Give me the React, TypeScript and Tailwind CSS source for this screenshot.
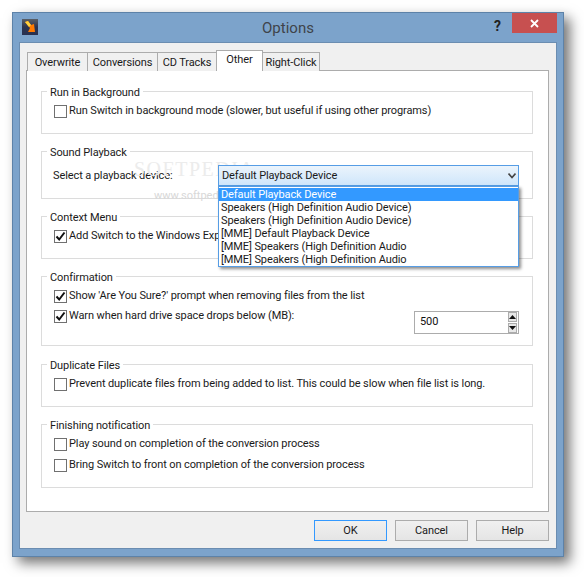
import type { ReactNode } from "react";

const tabs = [
  { label: "Overwrite", width: "w-[61px]" },
  { label: "Conversions", width: "w-[71px]" },
  { label: "CD Tracks", width: "w-[60px]" },
];

const devices = [
  "Speakers (High Definition Audio Device)",
  "Speakers (High Definition Audio Device)",
  "[MME] Default Playback Device",
  "[MME] Speakers (High Definition Audio",
  "[MME] Speakers (High Definition Audio",
];

function Check({ checked = false, label }: { checked?: boolean; label: string }) {
  return (
    <div className="flex items-center h-[20px] pl-[12px]">
      <span className="w-[13px] h-[13px] border border-[#707070] bg-white flex items-center justify-center shrink-0">
        {checked && (
          <svg width="11" height="11" viewBox="0 0 11 11">
            <path d="M1.5 5.5 L4.2 8.5 L9.5 1.5" fill="none" stroke="#111" strokeWidth="2" />
          </svg>
        )}
      </span>
      <span className="ml-[2px] pt-[1px] whitespace-nowrap">{label}</span>
    </div>
  );
}

function Group({ title, height, children }: { title: string; height: string; children: ReactNode }) {
  return (
    <fieldset className={`border border-[#dcdcdc] ${height} min-w-0 px-0 pb-0 pt-[1px]`}>
      <legend className="ml-[5px] px-[3px] h-[18px] pt-[3px] leading-[16px] whitespace-nowrap">{title}</legend>
      {children}
    </fieldset>
  );
}

export default function App() {
  return (
    <div className="w-[584px] h-[577px] bg-white overflow-hidden pl-[12px] pt-[12px] text-[11px] text-[#1a1a1a] font-['Roboto',sans-serif] tracking-[-0.1px]">
      <div className="w-[552px] h-[545px] border border-[#5d82a8] bg-[#7ca3cb] flex flex-col shadow-[6px_6px_12px_rgba(0,0,0,0.55)]">
        {/* title bar */}
        <div className="h-[29px] shrink-0 flex items-start relative">
          <svg className="mt-[6px] ml-[9px]" width="16" height="16" viewBox="0 0 16 16">
            <defs>
              <linearGradient id="ico" x1="0" y1="0" x2="0" y2="1">
                <stop offset="0" stopColor="#5a5f66" />
                <stop offset="0.5" stopColor="#2c3450" />
                <stop offset="1" stopColor="#283050" />
              </linearGradient>
            </defs>
            <rect width="16" height="16" fill="url(#ico)" />
            <path d="M3 3 L6 2 L9 6 L12 5 L13 13 L6 13 L8 9 Z" fill="#ff7a00" />
            <path d="M3 3 L6 2 L9 6 L7 8 Z" fill="#ffd23f" />
          </svg>
          <div className="absolute inset-x-0 top-[3px] text-center text-[15px] leading-[24px] text-[#3f444a] tracking-normal">Options</div>
          <span className="absolute left-[481px] top-[5px] text-[14px] leading-[16px] font-bold text-[#222]">?</span>
          <div className="absolute right-[6px] top-0 w-[45px] h-[20px] bg-[#c75050] flex items-center justify-center">
            <svg width="9" height="9" viewBox="0 0 9 9">
              <path d="M1 1 L8 8 M8 1 L1 8" stroke="#fff" strokeWidth="1.8" />
            </svg>
          </div>
        </div>

        {/* client area */}
        <div className="mx-[6px] mb-[7px] flex-1 bg-[#f0f0f0] border border-[#6b8db1] flex flex-col pl-[6px] pr-[7px] pt-[7px] relative">
          <div className="flex items-end h-[21px] pl-[1px] relative z-10 -mb-px">
            {tabs.map((t) => (
              <div key={t.label} className={`${t.width} h-[19px] border border-[#acacac] border-b-0 -mr-px bg-[#f0f0f0] text-center leading-[19px] whitespace-nowrap`}>
                {t.label}
              </div>
            ))}
            <div className="w-[47px] h-[21px] border border-[#acacac] border-b-0 -mr-px bg-white text-center leading-[18px] relative z-10">Other</div>
            <div className="w-[58px] h-[19px] border border-[#acacac] border-b-0 bg-[#f0f0f0] text-center leading-[19px] whitespace-nowrap">Right-Click</div>
          </div>

          <div className="h-[442px] border border-[#acacac] bg-white pl-[14px] pr-[15px] pt-[11px] flex flex-col gap-[8px]">
            <Group title="Run in Background" height="h-[52px]">
              <Check label="Run Switch in background mode (slower, but useful if using other programs)" />
            </Group>

            <Group title="Sound Playback" height="h-[57px]">
              <div className="pl-[11px] pt-[5px] leading-[20px]">Select a playback device:</div>
            </Group>

            <Group title="Context Menu" height="h-[52px]">
              <Check checked label="Add Switch to the Windows Explorer context menu" />
            </Group>

            <Group title="Confirmation" height="h-[79px] mb-[1px]">
              <Check checked label="Show 'Are You Sure?' prompt when removing files from the list" />
              <div className="relative">
                <Check checked label="Warn when hard drive space drops below (MB):" />
                <div className="absolute left-[372px] top-[5px] w-[105px] h-[23px] border border-[#acacac] bg-white flex items-center justify-between pl-[5px] pr-[1px] text-[#111]">
                  <span>500</span>
                  <div className="flex flex-col gap-[1px]">
                    <div className="w-[9px] h-[10px] bg-[#e8e8e8] border border-[#acacac] flex items-center justify-center">
                      <svg width="7" height="4" viewBox="0 0 7 4"><path d="M3.5 0 L7 4 L0 4 Z" fill="#111" /></svg>
                    </div>
                    <div className="w-[9px] h-[10px] bg-[#e8e8e8] border border-[#acacac] flex items-center justify-center">
                      <svg width="7" height="4" viewBox="0 0 7 4"><path d="M0 0 L7 0 L3.5 4 Z" fill="#111" /></svg>
                    </div>
                  </div>
                </div>
              </div>
            </Group>

            <Group title="Duplicate Files" height="h-[52px]">
              <Check label="Prevent duplicate files from being added to list. This could be slow when file list is long." />
            </Group>

            <Group title="Finishing notification" height="h-[73px]">
              <div className="flex flex-col gap-[1px]">
                <Check label="Play sound on completion of the conversion process" />
                <Check label="Bring Switch to front on completion of the conversion process" />
              </div>
            </Group>
          </div>

          <div className="flex justify-end gap-[8px] mt-[8px]">
            <button className="w-[73px] h-[21px] border border-[#3399ff] bg-gradient-to-b from-[#f0f0f0] to-[#e5e5e5] text-center leading-[18px]">OK</button>
            <button className="w-[73px] h-[21px] border border-[#acacac] bg-gradient-to-b from-[#f0f0f0] to-[#e5e5e5] text-center leading-[18px]">Cancel</button>
            <button className="w-[73px] h-[21px] border border-[#acacac] bg-gradient-to-b from-[#f0f0f0] to-[#e5e5e5] text-center leading-[18px]">Help</button>
          </div>

          {/* softpedia watermark, sits over the page */}
          <div className="absolute left-[114px] top-[114px] text-[20px] leading-[24px] font-['Liberation_Serif',serif] tracking-[1.5px] text-[#ececec]">SOFTPEDIA</div>
          <div className="absolute left-[134px] top-[147px] text-[11px] leading-[12px] tracking-normal text-[#d8d8d8]">www.softpedia.com</div>

          {/* open combo box */}
          <div className="absolute left-[198px] top-[122px] w-[301px] h-[21px] border border-[#569de5] bg-gradient-to-b from-[#ebf4fc] to-[#cfe6fb] flex items-center justify-between pl-[3px] pr-[2px] leading-[18px]">
            <span>Default Playback Device</span>
            <svg width="8" height="6" viewBox="0 0 8 6"><path d="M0.5 0.5 L4 4.5 L7.5 0.5" fill="none" stroke="#444" strokeWidth="1.6" /></svg>
          </div>
          <div className="absolute left-[198px] top-[143px] w-[301px] h-[81px] border border-[#569de5] bg-white shadow-[2px_2px_3px_rgba(0,0,0,0.45)] leading-[13px] pt-[1px] flex flex-col">
            <div className="bg-[#3399ff] text-white pl-[2px]">Default Playback Device</div>
            {devices.map((d, i) => (
              <div key={i} className="pl-[2px]">{d}</div>
            ))}
          </div>
        </div>
      </div>
    </div>
  );
}
